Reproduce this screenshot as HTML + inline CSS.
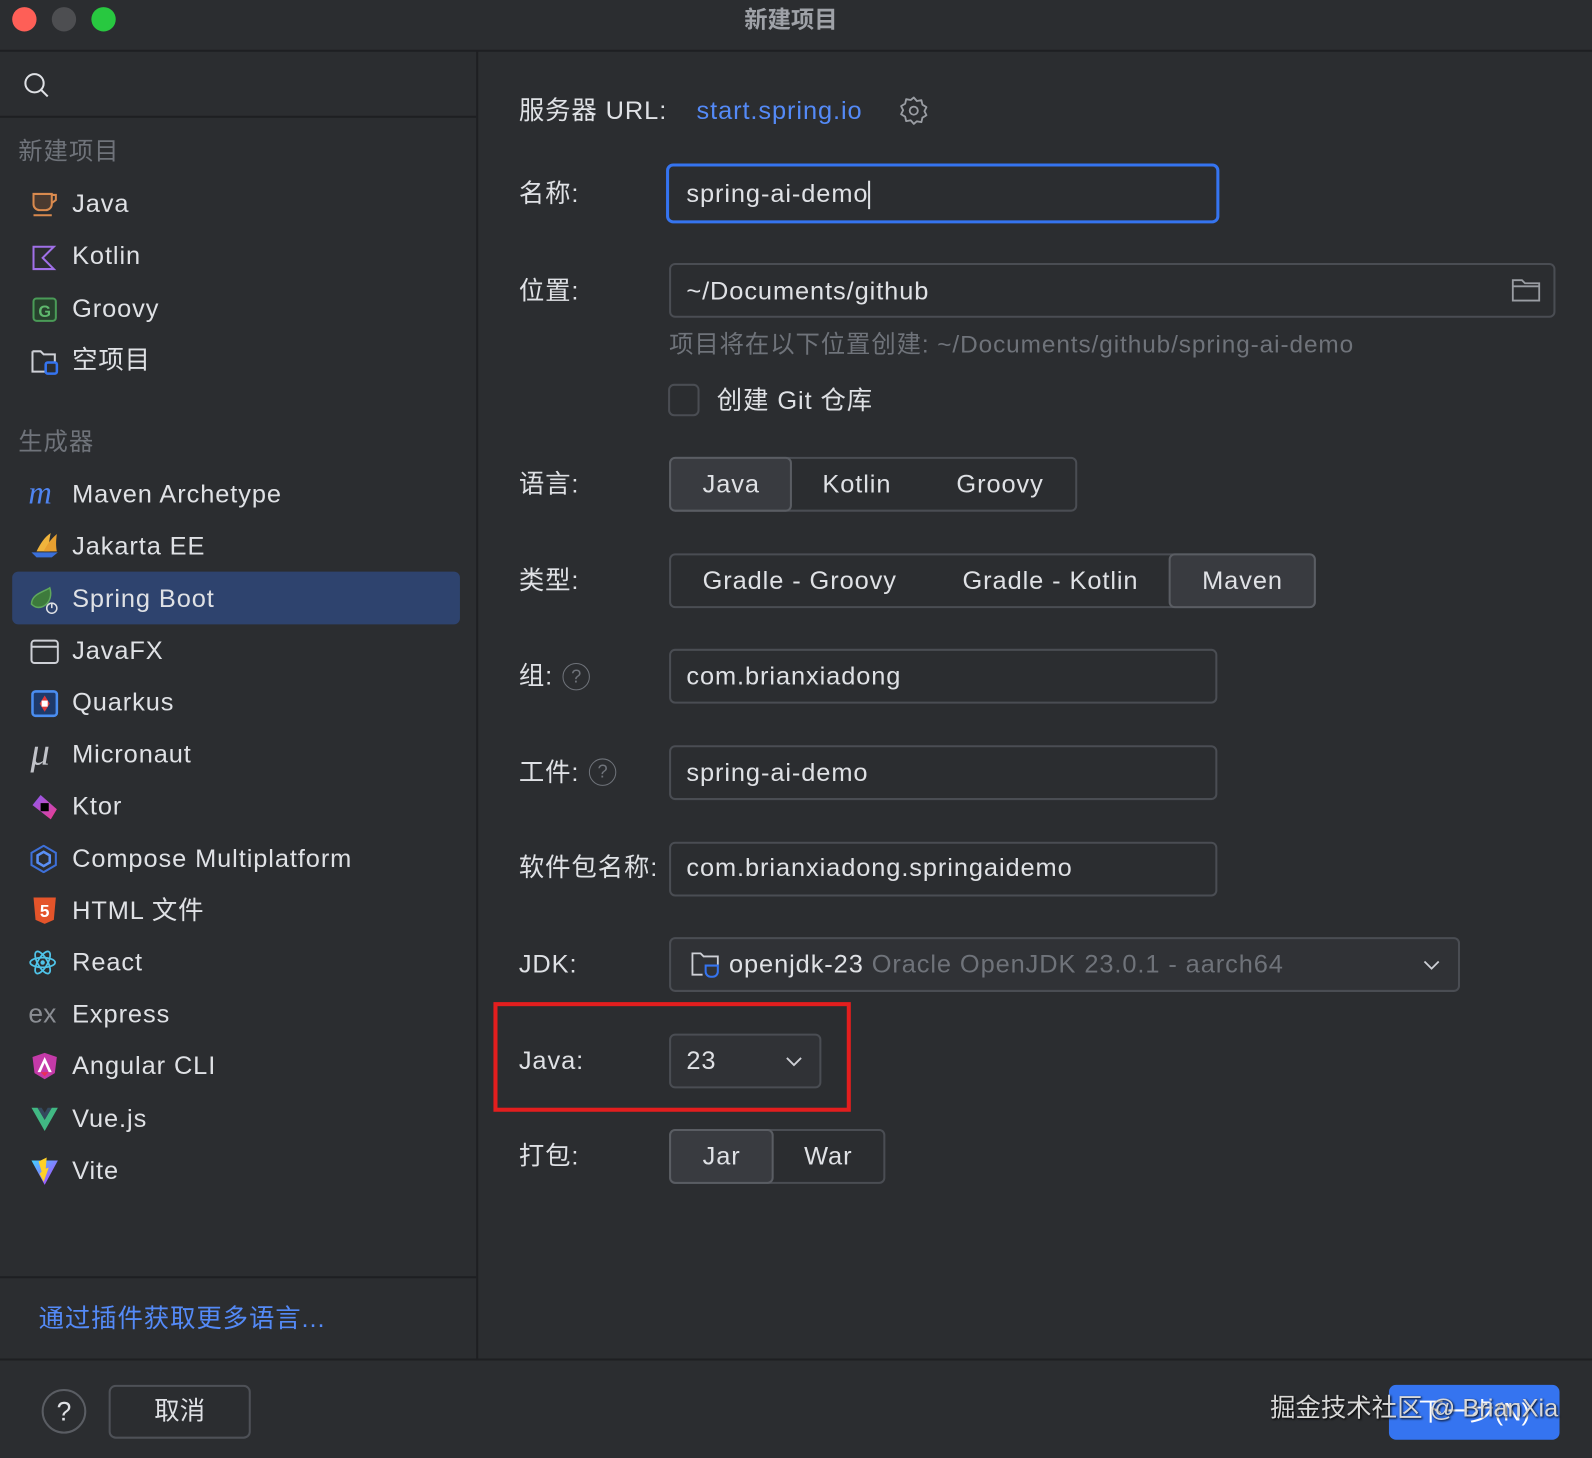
<!DOCTYPE html>
<html><head><meta charset="utf-8"><style>
*{margin:0;padding:0;box-sizing:border-box}
html,body{width:1592px;height:1458px;overflow:hidden;background:#2b2d30}
#w{position:absolute;left:0;top:0;width:1568px;height:1436px;transform:scale(1.01531);transform-origin:0 0;background:#2b2d30;font-family:"Liberation Sans","Noto Sans CJK SC",sans-serif;color:#dfe1e5;font-size:25px}
.a{position:absolute}
.t{position:absolute;height:34px;line-height:34px;white-space:nowrap;letter-spacing:0.9px}
.hl{position:absolute;background:#1e1f22}
.box{position:absolute;border:2px solid #4a4d53;border-radius:6px}
.ic{position:absolute;width:28px;height:28px}
.g{color:#6f737a}
</style></head><body><div id="w">
<div class="a" style="left:12px;top:7px;width:24px;height:24px;border-radius:50%;background:#fe5f57"></div>
<div class="a" style="left:51px;top:7px;width:24px;height:24px;border-radius:50%;background:#4d4e51"></div>
<div class="a" style="left:90px;top:7px;width:24px;height:24px;border-radius:50%;background:#28c840"></div>
<div class="t" style="left:733px;top:2px;font-size:23px;font-weight:bold;color:#9fa2a8;letter-spacing:0">新建项目</div>
<div class="hl" style="left:0;top:49px;width:1568px;height:2px"></div>
<div class="hl" style="left:469px;top:50px;width:2px;height:1290px"></div>
<svg class="a" style="left:22px;top:70px" width="28" height="28" viewBox="0 0 28 28"><circle cx="12" cy="12" r="9" fill="none" stroke="#dfe1e5" stroke-width="2"/><path d="M18.5 18.5L25 25" stroke="#dfe1e5" stroke-width="2"/></svg>
<div class="hl" style="left:0;top:114px;width:469px;height:2px"></div>
<div class="t g" style="left:18px;top:133px;font-size:24px">新建项目</div>
<svg class="ic" style="left:30px;top:188px" viewBox="0 0 28 28"><path d="M3 3h18v10a6 6 0 0 1-6 6H9a6 6 0 0 1-6-6z" fill="#4a3a30" stroke="#d98a4e" stroke-width="2"/><path d="M21 4h4v5l-4 3" fill="none" stroke="#d98a4e" stroke-width="2"/><path d="M3 24h18" stroke="#d98a4e" stroke-width="2"/></svg>
<div class="t" style="left:71px;top:184px">Java</div>
<svg class="ic" style="left:30px;top:240px" viewBox="0 0 28 28"><path d="M3 3h20l-11 11 11 11H3z" fill="none" stroke="#a070e8" stroke-width="2"/></svg>
<div class="t" style="left:71px;top:235px">Kotlin</div>
<svg class="ic" style="left:30px;top:291px" viewBox="0 0 28 28"><rect x="3" y="3" width="22" height="22" rx="3" fill="#27412d" stroke="#4a9b57" stroke-width="2"/><text x="14" y="21" font-size="16" font-weight="bold" fill="#5fb86e" text-anchor="middle" font-family="Liberation Sans">G</text></svg>
<div class="t" style="left:71px;top:287px">Groovy</div>
<svg class="ic" style="left:30px;top:342px" viewBox="0 0 28 28"><path d="M2 4h8l3 3h11v8M15 24H2V4" fill="none" stroke="#ced0d6" stroke-width="2"/><rect x="15" y="15" width="11" height="11" rx="2" fill="none" stroke="#3574f0" stroke-width="2.5"/></svg>
<div class="t" style="left:71px;top:338px">空项目</div>
<div class="t g" style="left:18px;top:419px;font-size:24px">生成器</div>
<div class="t" style="left:28px;top:468px;font-size:32px;font-style:italic;color:#4f84f0;font-family:'Liberation Serif',serif">m</div>
<div class="t" style="left:71px;top:470px">Maven Archetype</div>
<svg class="ic" style="left:30px;top:523px" viewBox="0 0 28 28"><path d="M6 20C10 12 14 6 20 2 18 10 18 16 19 20z" fill="#f0b43c"/><path d="M13 20c3-6 7-12 13-17-1 7-1 12 0 17z" fill="#e8a030"/><path d="M1 21h26l-6 5H6z" fill="#3b6fd8"/></svg>
<div class="t" style="left:71px;top:521px">Jakarta EE</div>
<div class="a" style="left:12px;top:563px;width:441px;height:52px;background:#2e436e;border-radius:6px"></div>
<svg class="ic" style="left:29px;top:577px" viewBox="0 0 28 28"><path d="M2 18C2 8 14 6 20 2c2 6 1 14-6 18-4 2-8 2-12-2z" fill="#3d7a3c" stroke="#5fa85c" stroke-width="1.5"/><circle cx="22" cy="22" r="5" fill="#2e436e" stroke="#dfe1e5" stroke-width="1.5"/><path d="M22 17v5" stroke="#dfe1e5" stroke-width="1.5"/></svg>
<div class="t" style="left:71px;top:573px">Spring Boot</div>
<svg class="ic" style="left:30px;top:628px" viewBox="0 0 28 28"><rect x="1" y="3" width="26" height="22" rx="3" fill="none" stroke="#ced0d6" stroke-width="2"/><path d="M1 9h26" stroke="#ced0d6" stroke-width="2"/></svg>
<div class="t" style="left:71px;top:624px">JavaFX</div>
<svg class="ic" style="left:30px;top:679px" viewBox="0 0 28 28"><rect x="2" y="2" width="24" height="24" rx="3" fill="#1e3a6a" stroke="#4a8df0" stroke-width="2.5"/><path d="M14 6l5 8-5 8-5-8z" fill="#e03a3a"/><rect x="11" y="11" width="6" height="6" fill="#fff"/></svg>
<div class="t" style="left:71px;top:675px">Quarkus</div>
<div class="t" style="left:30px;top:724px;font-size:38px;font-style:italic;color:#c0c2c8;font-family:'Liberation Serif',serif;letter-spacing:0">μ</div>
<div class="t" style="left:71px;top:726px">Micronaut</div>
<svg class="ic" style="left:30px;top:781px" viewBox="0 0 28 28"><defs><linearGradient id="kg" x1="0" y1="0" x2="1" y2="1"><stop offset="0" stop-color="#8a5cf6"/><stop offset="1" stop-color="#f03a8a"/></linearGradient></defs><path d="M10 2l16 14-6 10L2 12z" fill="url(#kg)"/><rect x="10" y="10" width="8" height="8" fill="#000"/></svg>
<div class="t" style="left:71px;top:777px">Ktor</div>
<svg class="ic" style="left:29px;top:832px" viewBox="0 0 28 28"><path d="M14 1l12 7v12l-12 7-12-7V8z" fill="none" stroke="#3d6fd8" stroke-width="2"/><path d="M14 7l6 3.5v7L14 21l-6-3.5v-7z" fill="none" stroke="#5a8ff5" stroke-width="2.5"/></svg>
<div class="t" style="left:71px;top:829px">Compose Multiplatform</div>
<svg class="ic" style="left:30px;top:883px" viewBox="0 0 28 28"><path d="M3 1h22l-2 22-9 4-9-4z" fill="#e4542a"/><text x="14" y="20" font-size="17" font-weight="bold" fill="#fff" text-anchor="middle" font-family="Liberation Sans">5</text></svg>
<div class="t" style="left:71px;top:880px">HTML 文件</div>
<svg class="ic" style="left:28px;top:934px" width="32" height="32" viewBox="0 0 32 32"><g fill="none" stroke="#4fc3e8" stroke-width="2"><ellipse cx="16" cy="16" rx="14" ry="5.5"/><ellipse cx="16" cy="16" rx="14" ry="5.5" transform="rotate(60 16 16)"/><ellipse cx="16" cy="16" rx="14" ry="5.5" transform="rotate(120 16 16)"/></g><circle cx="16" cy="16" r="2.5" fill="#4fc3e8"/></svg>
<div class="t" style="left:71px;top:931px">React</div>
<div class="t" style="left:28px;top:981px;font-size:26px;color:#8a8d93;letter-spacing:0">ex</div>
<div class="t" style="left:71px;top:982px">Express</div>
<svg class="ic" style="left:30px;top:1036px" viewBox="0 0 28 28"><path d="M14 1l12 4-2 16-10 6-10-6L2 5z" fill="#c43aa8"/><path d="M14 5l-7 15h3l4-9 4 9h3z" fill="#fff"/><path d="M10 20h8l-4 4z" fill="#e8305a"/></svg>
<div class="t" style="left:71px;top:1033px">Angular CLI</div>
<svg class="ic" style="left:30px;top:1089px" viewBox="0 0 28 28"><path d="M1 2h6l7 12 7-12h6L14 25z" fill="#41b883"/><path d="M7 2h4l3 5 3-5h4l-7 12z" fill="#34495e"/></svg>
<div class="t" style="left:71px;top:1085px">Vue.js</div>
<svg class="ic" style="left:30px;top:1139px" viewBox="0 0 28 28"><defs><linearGradient id="vg" x1="0" y1="0" x2="1" y2="1"><stop offset="0" stop-color="#41d1ff"/><stop offset="1" stop-color="#bd34fe"/></linearGradient></defs><path d="M1 4l13 24L27 4z" fill="url(#vg)"/><path d="M16 1l-8 4 3 10-2 2 4 8 5-14-3 1z" fill="#ffd028"/></svg>
<div class="t" style="left:71px;top:1136px">Vite</div>
<div class="hl" style="left:0;top:1257px;width:469px;height:2px"></div>
<div class="t" style="left:38px;top:1282px;color:#548af7">通过插件获取更多语言...</div>
<div class="hl" style="left:0;top:1338px;width:1568px;height:2px"></div>
<div class="a" style="left:41px;top:1368px;width:44px;height:44px;border:2px solid #5a5d63;border-radius:50%;text-align:center;line-height:40px;font-size:26px;color:#dfe1e5">?</div>
<div class="a" style="left:107px;top:1364px;width:140px;height:53px;border:2px solid #4e5157;border-radius:7px;text-align:center;line-height:49px">取消</div>
<div class="a" style="left:1368px;top:1364px;width:168px;height:54px;background:#3574f0;border-radius:7px;text-align:center;line-height:54px;color:#fff">下一步(N)</div>
<div class="t" style="left:1251px;top:1370px;color:#d8d8d8;text-shadow:1px 1px 2px #000;letter-spacing:0">掘金技术社区 @ BrianXia</div>
<div class="t" style="left:511px;top:92px">服务器 URL:</div>
<div class="t" style="left:686px;top:92px;color:#548af7">start.spring.io</div>
<svg class="a" style="left:885px;top:94px" width="30" height="30" viewBox="0 0 30 30"><path d="M15 2l3 3.5 4.5-.8 1 4.4 4 2.4-2 4 2 4-4 2.4-1 4.4-4.5-.8L15 28l-3-3.5-4.5.8-1-4.4-4-2.4 2-4-2-4 4-2.4 1-4.4 4.5.8z" fill="none" stroke="#9a9da3" stroke-width="1.8" stroke-linejoin="round"/><circle cx="15" cy="15" r="4" fill="none" stroke="#9a9da3" stroke-width="1.8"/></svg>
<div class="t" style="left:511px;top:174px">名称:</div>
<div class="a" style="left:656px;top:161px;width:545px;height:59px;border:3px solid #3574f0;border-radius:7px"></div>
<div class="t" style="left:676px;top:174px">spring-ai-demo<span style="display:inline-block;width:2px;height:28px;background:#dfe1e5;vertical-align:middle"></span></div>
<div class="t" style="left:511px;top:270px">位置:</div>
<div class="box" style="left:659px;top:259px;width:873px;height:54px"></div>
<div class="t" style="left:676px;top:270px">~/Documents/github</div>
<svg class="a" style="left:1488px;top:273px" width="30" height="26" viewBox="0 0 30 26"><path d="M2 3h9l3 3h14v17H2z" fill="none" stroke="#9a9da3" stroke-width="1.8"/><path d="M2 9h26" stroke="#9a9da3" stroke-width="1.8"/></svg>
<div class="t g" style="left:659px;top:323px;font-size:24px">项目将在以下位置创建: ~/Documents/github/spring-ai-demo</div>
<div class="box" style="left:658px;top:378px;width:31px;height:32px"></div>
<div class="t" style="left:706px;top:378px">创建 Git 仓库</div>
<div class="t" style="left:511px;top:460px">语言:</div>
<div class="box" style="left:659px;top:450px;width:402px;height:54px"></div>
<div class="box" style="left:659px;top:450px;width:121px;height:54px;background:#393b40;border-color:#5a5d63"></div>
<div class="t" style="left:692px;top:460px">Java</div>
<div class="t" style="left:810px;top:460px">Kotlin</div>
<div class="t" style="left:942px;top:460px">Groovy</div>
<div class="t" style="left:511px;top:555px">类型:</div>
<div class="box" style="left:659px;top:545px;width:637px;height:54px"></div>
<div class="box" style="left:1151px;top:545px;width:145px;height:54px;background:#393b40;border-color:#5a5d63"></div>
<div class="t" style="left:692px;top:555px">Gradle - Groovy</div>
<div class="t" style="left:948px;top:555px">Gradle - Kotlin</div>
<div class="t" style="left:1184px;top:555px">Maven</div>
<div class="t" style="left:511px;top:649px">组:</div>
<div class="a" style="left:554px;top:653px;width:27px;height:27px;border:1.5px solid #6f737a;border-radius:50%;text-align:center;line-height:24px;font-size:18px;color:#6f737a">?</div>
<div class="box" style="left:659px;top:639px;width:540px;height:54px"></div>
<div class="t" style="left:676px;top:649px">com.brianxiadong</div>
<div class="t" style="left:511px;top:744px">工件:</div>
<div class="a" style="left:580px;top:747px;width:27px;height:27px;border:1.5px solid #6f737a;border-radius:50%;text-align:center;line-height:24px;font-size:18px;color:#6f737a">?</div>
<div class="box" style="left:659px;top:734px;width:540px;height:54px"></div>
<div class="t" style="left:676px;top:744px">spring-ai-demo</div>
<div class="t" style="left:511px;top:838px">软件包名称:</div>
<div class="box" style="left:659px;top:829px;width:540px;height:54px"></div>
<div class="t" style="left:676px;top:838px">com.brianxiadong.springaidemo</div>
<div class="t" style="left:511px;top:933px">JDK:</div>
<div class="box" style="left:659px;top:923px;width:779px;height:54px;background:#303236"></div>
<svg class="a" style="left:680px;top:936px" width="32" height="30" viewBox="0 0 32 30"><path d="M12 24H2V3h8l3 3h14v8" fill="none" stroke="#ced0d6" stroke-width="1.8"/><path d="M15 15h12v6a5 5 0 0 1-5 5h-2a5 5 0 0 1-5-5z" fill="none" stroke="#3574f0" stroke-width="2"/></svg>
<div class="t" style="left:718px;top:933px">openjdk-23 <span class="g">Oracle OpenJDK 23.0.1 - aarch64</span></div>
<svg class="a" style="left:1400px;top:943px" width="20" height="14" viewBox="0 0 20 14"><path d="M3 4l7 7 7-7" fill="none" stroke="#ced0d6" stroke-width="1.8"/></svg>
<div class="a" style="left:486px;top:987px;width:352px;height:108px;border:4px solid #e31e1e"></div>
<div class="t" style="left:511px;top:1028px">Java:</div>
<div class="box" style="left:659px;top:1018px;width:150px;height:54px;background:#303236"></div>
<div class="t" style="left:676px;top:1028px">23</div>
<svg class="a" style="left:772px;top:1038px" width="20" height="14" viewBox="0 0 20 14"><path d="M3 4l7 7 7-7" fill="none" stroke="#ced0d6" stroke-width="1.8"/></svg>
<div class="t" style="left:511px;top:1122px">打包:</div>
<div class="box" style="left:659px;top:1112px;width:213px;height:54px"></div>
<div class="box" style="left:659px;top:1112px;width:103px;height:54px;background:#393b40;border-color:#5a5d63"></div>
<div class="t" style="left:692px;top:1122px">Jar</div>
<div class="t" style="left:792px;top:1122px">War</div>
</div></body></html>
